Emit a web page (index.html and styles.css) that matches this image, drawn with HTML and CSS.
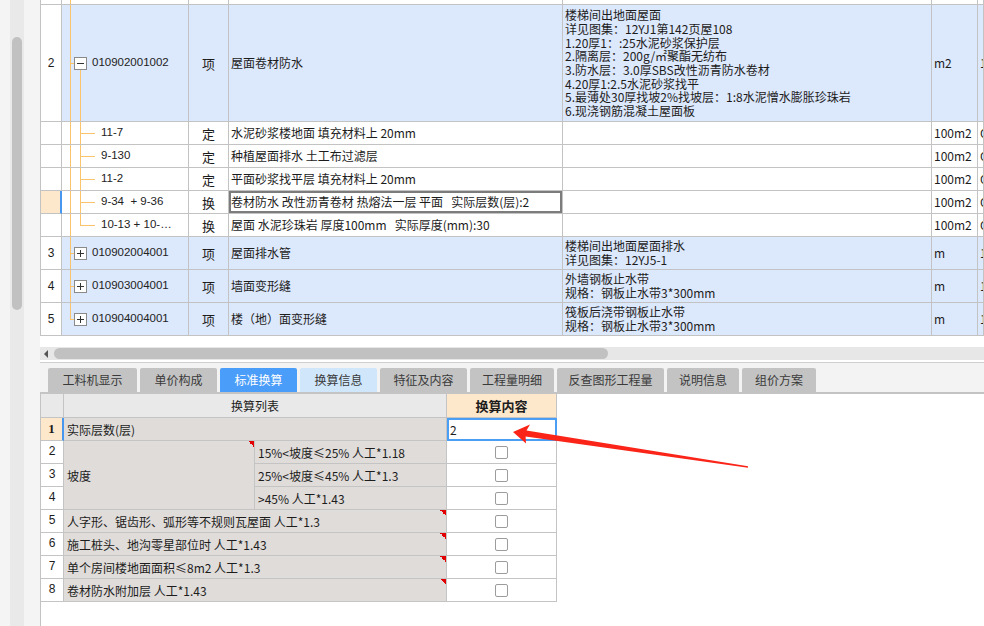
FILE: index.html
```html
<!DOCTYPE html>
<html>
<head>
    <meta charset="utf-8" />
    <title>标准换算</title>
    <meta name="viewport" content="width=device-width, initial-scale=1">
    <link rel="stylesheet" href="styles.css">
</head>
<body>
<div class="page">
    <div class="side"><div class="vtrack"><div class="vthumb"></div></div></div>
    <div class="main">
        <!-- 清单 / 定额 表格 -->
        <div class="grid">
            <div class="row r-tail">
                <div class="c num"></div><div class="c tree t-top"></div><div class="c"></div><div class="c"></div><div class="c"></div><div class="c"></div><div class="c"></div>
            </div>
            <div class="row r-big blue">
                <div class="c num">2</div>
                <div class="c tree t-open"><span class="box minus"></span><span class="code">010902001002</span></div>
                <div class="c kind">项</div>
                <div class="c name">屋面卷材防水</div>
                <div class="c desc"><div>楼梯间出地面屋面<br>详见图集：12YJ1第142页屋108<br>1.20厚1：:25水泥砂浆保护层<br>2.隔离层：200g/㎡聚酯无纺布<br>3.防水层：3.0厚SBS改性沥青防水卷材<br>4.20厚1:2.5水泥砂浆找平<br>5.最薄处30厚找坡2%找坡层：1:8水泥憎水膨胀珍珠岩<br>6.现浇钢筋混凝土屋面板</div></div>
                <div class="c unit">m2</div>
                <div class="c more">1</div>
            </div>
            <div class="row r-sub">
                <div class="c num"></div>
                <div class="c tree t-child"><span class="code">11-7</span></div>
                <div class="c kind">定</div>
                <div class="c name">水泥砂浆楼地面 填充材料上 20mm</div>
                <div class="c desc"></div>
                <div class="c unit">100m2</div>
                <div class="c more">Q</div>
            </div>
            <div class="row r-sub">
                <div class="c num"></div>
                <div class="c tree t-child"><span class="code">9-130</span></div>
                <div class="c kind">定</div>
                <div class="c name">种植屋面排水 土工布过滤层</div>
                <div class="c desc"></div>
                <div class="c unit">100m2</div>
                <div class="c more">Q</div>
            </div>
            <div class="row r-sub">
                <div class="c num"></div>
                <div class="c tree t-child"><span class="code">11-2</span></div>
                <div class="c kind">定</div>
                <div class="c name">平面砂浆找平层 填充材料上 20mm</div>
                <div class="c desc"></div>
                <div class="c unit">100m2</div>
                <div class="c more">Q</div>
            </div>
            <div class="row r-sub">
                <div class="c num cur"></div>
                <div class="c tree t-child"><span class="code">9-34  + 9-36</span></div>
                <div class="c kind">换</div>
                <div class="c name focus">卷材防水 改性沥青卷材 热熔法一层 平面   实际层数(层):2</div>
                <div class="c desc"></div>
                <div class="c unit">100m2</div>
                <div class="c more">Q</div>
            </div>
            <div class="row r-sub">
                <div class="c num"></div>
                <div class="c tree t-child t-last"><span class="code">10-13 + 10-…</span></div>
                <div class="c kind">换</div>
                <div class="c name">屋面 水泥珍珠岩 厚度100mm   实际厚度(mm):30</div>
                <div class="c desc"></div>
                <div class="c unit">100m2</div>
                <div class="c more">Q</div>
            </div>
            <div class="row r-item blue">
                <div class="c num">3</div>
                <div class="c tree t-closed"><span class="box plus"></span><span class="code">010902004001</span></div>
                <div class="c kind">项</div>
                <div class="c name">屋面排水管</div>
                <div class="c desc"><div>楼梯间出地面屋面排水<br>详见图集：12YJ5-1</div></div>
                <div class="c unit">m</div>
                <div class="c more">1</div>
            </div>
            <div class="row r-item blue">
                <div class="c num">4</div>
                <div class="c tree t-closed"><span class="box plus"></span><span class="code">010903004001</span></div>
                <div class="c kind">项</div>
                <div class="c name">墙面变形缝</div>
                <div class="c desc"><div>外墙钢板止水带<br>规格：钢板止水带3*300mm</div></div>
                <div class="c unit">m</div>
                <div class="c more">1</div>
            </div>
            <div class="row r-item blue">
                <div class="c num">5</div>
                <div class="c tree t-closed t-last"><span class="box plus"></span><span class="code">010904004001</span></div>
                <div class="c kind">项</div>
                <div class="c name">楼（地）面变形缝</div>
                <div class="c desc"><div>筏板后浇带钢板止水带<br>规格：钢板止水带3*300mm</div></div>
                <div class="c unit">m</div>
                <div class="c more">1</div>
            </div>
        </div>
        <div class="hscroll"><span class="larrow"></span><span class="hthumb"></span></div>

        <!-- 页签 -->
        <div class="tabs">
            <div class="tab w89">工料机显示</div>
            <div class="tab w77">单价构成</div>
            <div class="tab w77 active">标准换算</div>
            <div class="tab w77 light">换算信息</div>
            <div class="tab w87">特征及内容</div>
            <div class="tab w84">工程量明细</div>
            <div class="tab w107">反查图形工程量</div>
            <div class="tab w72">说明信息</div>
            <div class="tab w74">组价方案</div>
        </div>

        <!-- 标准换算 -->
        <div class="bottom">
            <div class="sheet">
                <div class="s hd"></div>
                <div class="s hd span2 mid">换算列表</div>
                <div class="s hd val">换算内容</div>

                <div class="s no cur">1</div>
                <div class="s txt span2">实际层数(层)</div>
                <div class="s edit">2</div>

                <div class="s no">2</div>
                <div class="s txt rows3 flag">坡度</div>
                <div class="s txt">15%&lt;坡度≤25% 人工*1.18</div>
                <div class="s chkc"><span class="chk"></span></div>

                <div class="s no">3</div>
                <div class="s txt">25%&lt;坡度≤45% 人工*1.3</div>
                <div class="s chkc"><span class="chk"></span></div>

                <div class="s no">4</div>
                <div class="s txt">&gt;45% 人工*1.43</div>
                <div class="s chkc"><span class="chk"></span></div>

                <div class="s no">5</div>
                <div class="s txt span2 flag">人字形、锯齿形、弧形等不规则瓦屋面 人工*1.3</div>
                <div class="s chkc"><span class="chk"></span></div>

                <div class="s no">6</div>
                <div class="s txt span2 flag">施工桩头、地沟零星部位时 人工*1.43</div>
                <div class="s chkc"><span class="chk"></span></div>

                <div class="s no">7</div>
                <div class="s txt span2 flag">单个房间楼地面面积≤8m2 人工*1.3</div>
                <div class="s chkc"><span class="chk"></span></div>

                <div class="s no">8</div>
                <div class="s txt span2 flag">卷材防水附加层 人工*1.43</div>
                <div class="s chkc"><span class="chk"></span></div>
            </div>
        </div>
    </div>

    <svg class="arrow" width="984" height="626" viewBox="0 0 984 626">
        <polygon points="513,432 530,424.5 526.5,430.6 748,466.2 748,467.8 525.6,436.4 526,443.5" fill="#fb2418"/>
    </svg>
</div>
</body>
</html>
```

FILE: styles.css
```css
*{
    box-sizing: border-box;
}
body{
    margin: 0;
    font-family: "Noto Sans CJK SC", "Noto Sans", sans-serif;
    font-size: 12px;
    color: #1c1c1c;
    background: #f4f4f4;
}
.page{
    display: flex;
    height: 626px;
    overflow: hidden;
    position: relative;
}
.side{
    width: 40px;
    flex: none;
    padding-left: 10px;
    background: #f4f4f4;
}
.vtrack{
    width: 14px;
    height: 100%;
    padding: 37px 2px 0;
    background: #e9e9e9;
}
.vthumb{
    height: 273px;
    border-radius: 5px;
    background: #c1c1c1;
}
.main{
    flex: 1;
    min-width: 0;
    display: flex;
    flex-direction: column;
    background: #fff;
}

/* top grid */
.grid{
    border-left: 1px solid #c3c3c3;
}
.row{
    display: grid;
    grid-template-columns: 21px 127px 40px 334px 369px 46px 1fr;
}
.r-tail{ height: 5px; }
.r-big{ height: 117px; }
.r-sub{ height: 23px; }
.r-item{ height: 33px; }
.c{
    display: flex;
    align-items: center;
    border-right: 1px solid #c3c3c3;
    border-bottom: 1px solid #c3c3c3;
    white-space: pre;
    overflow: hidden;
    line-height: 1;
}
.blue .c{
    background-color: #dce8fb;
}
.blue .c.num{
    background-color: #fff;
}
.num{
    justify-content: center;
    font-family: "Liberation Sans", sans-serif;
}
.num.cur{
    background: #fee8cb;
    border-right: 2px solid #4796ef;
}
.code{
    font-family: "Liberation Sans", sans-serif;
    font-size: 11.5px;
    color: #222;
}
.kind{
    justify-content: center;
    font-size: 13px;
}
.name{
    padding-left: 2px;
}
.focus{
    box-shadow: inset 0 0 0 2px #7c7c7c;
}
.desc{
    padding-left: 2px;
}
.desc div{
    line-height: 13.7px;
}
.unit, .more{
    padding-left: 2px;
}

/* tree guide lines */
.tree{
    --tl: #fbc46c;
    background-repeat: no-repeat;
}
.t-top{
    background-image: linear-gradient(var(--tl), var(--tl));
    background-size: 1px 100%;
    background-position: 8px 0;
}
.t-open{
    background-image: linear-gradient(var(--tl), var(--tl)), linear-gradient(var(--tl), var(--tl)), linear-gradient(var(--tl), var(--tl));
    background-size: 1px 100%, 4px 1px, 1px 50%;
    background-position: 8px 0, 8px 50%, 18px 100%;
}
.t-child{
    padding-left: 39px;
    background-image: linear-gradient(var(--tl), var(--tl)), linear-gradient(var(--tl), var(--tl)), linear-gradient(var(--tl), var(--tl));
    background-size: 1px 100%, 1px 100%, 15px 1px;
    background-position: 8px 0, 18px 0, 18px 50%;
}
.t-child.t-last{
    background-size: 1px 100%, 1px 50%, 15px 1px;
}
.t-closed{
    background-image: linear-gradient(var(--tl), var(--tl)), linear-gradient(var(--tl), var(--tl));
    background-size: 1px 100%, 4px 1px;
    background-position: 8px 0, 8px 50%;
}
.t-closed.t-last{
    background-size: 1px 50%, 4px 1px;
}
.box{
    width: 13px;
    height: 13px;
    flex: none;
    margin: 0 5px 0 12px;
    border: 1px solid #8a8a8a;
    background-color: #fff;
    background-repeat: no-repeat;
    background-position: center;
}
.minus{
    background-image: linear-gradient(#333, #333);
    background-size: 7px 1px;
}
.plus{
    background-image: linear-gradient(#333, #333), linear-gradient(#333, #333);
    background-size: 7px 1px, 1px 7px;
}

/* horizontal scrollbar */
.hscroll{
    height: 13px;
    margin: 11px 0 2px;
    display: flex;
    align-items: center;
    background: #e7e7e7;
}
.larrow{
    margin-left: 4px;
    border-right: 4px solid #555;
    border-top: 4px solid transparent;
    border-bottom: 4px solid transparent;
}
.hthumb{
    margin-left: 6px;
    width: 554px;
    height: 11px;
    border-radius: 6px;
    background: #c1c1c1;
}

/* tabs */
.tabs{
    display: flex;
    gap: 3px;
    padding: 5px 0 0 8px;
    border-top: 1px solid #cfcfcf;
    border-bottom: 2px solid #c4c4c4;
    background: #f3f3f3;
}
.tab{
    height: 24px;
    line-height: 24px;
    text-align: center;
    color: #3a3a3a;
    background: #c3c3c3;
    border-radius: 2px 2px 0 0;
}
.tab.active{
    background: #4a9df8;
    color: #fff;
}
.tab.light{
    background: #cfe6fb;
}
.w72{ width: 72px; }
.w74{ width: 74px; }
.w77{ width: 77px; }
.w84{ width: 84px; }
.w87{ width: 87px; }
.w89{ width: 89px; }
.w107{ width: 107px; }

/* standard conversion sheet */
.bottom{
    flex: 1;
    border-left: 1px solid #c3c3c3;
    background: #fff;
}
.sheet{
    display: grid;
    grid-template-columns: 23px 191px 192px 110px;
    grid-template-rows: 24px repeat(8, 23px);
}
.s{
    display: flex;
    align-items: center;
    border-right: 1px solid #c4c4c4;
    border-bottom: 1px solid #c4c4c4;
    white-space: nowrap;
    overflow: hidden;
}
.hd{
    background: #e9e9e9;
}
.mid{
    justify-content: center;
}
.hd.val{
    justify-content: center;
    background: #fde8cb;
    font-weight: bold;
    font-size: 13px;
}
.span2{
    grid-column: span 2;
}
.rows3{
    grid-row: span 3;
}
.no{
    justify-content: center;
    background: #fff;
    font-family: "Liberation Mono", monospace;
}
.no.cur{
    background: #fee8cb;
    border-right: 2px solid #4796ef;
    font-family: "Liberation Serif", serif;
    font-weight: bold;
    font-size: 13px;
}
.txt{
    padding-left: 3px;
    background: #e0dcda;
}
.flag{
    background: linear-gradient(to bottom left, #e30000 50%, transparent 50%) top right / 6px 6px no-repeat, #e0dcda;
}
.edit{
    padding-left: 3px;
    background: #fff;
    outline: 2px solid #4a9ff5;
    outline-offset: -2px;
}
.chkc{
    justify-content: center;
    background: #fff;
}
.chk{
    width: 13px;
    height: 13px;
    border: 1px solid #9c9c9c;
    border-radius: 2px;
    background: #fff;
}

/* annotation arrow */
.arrow{
    position: absolute;
    top: 0;
    left: 0;
    pointer-events: none;
}
```
